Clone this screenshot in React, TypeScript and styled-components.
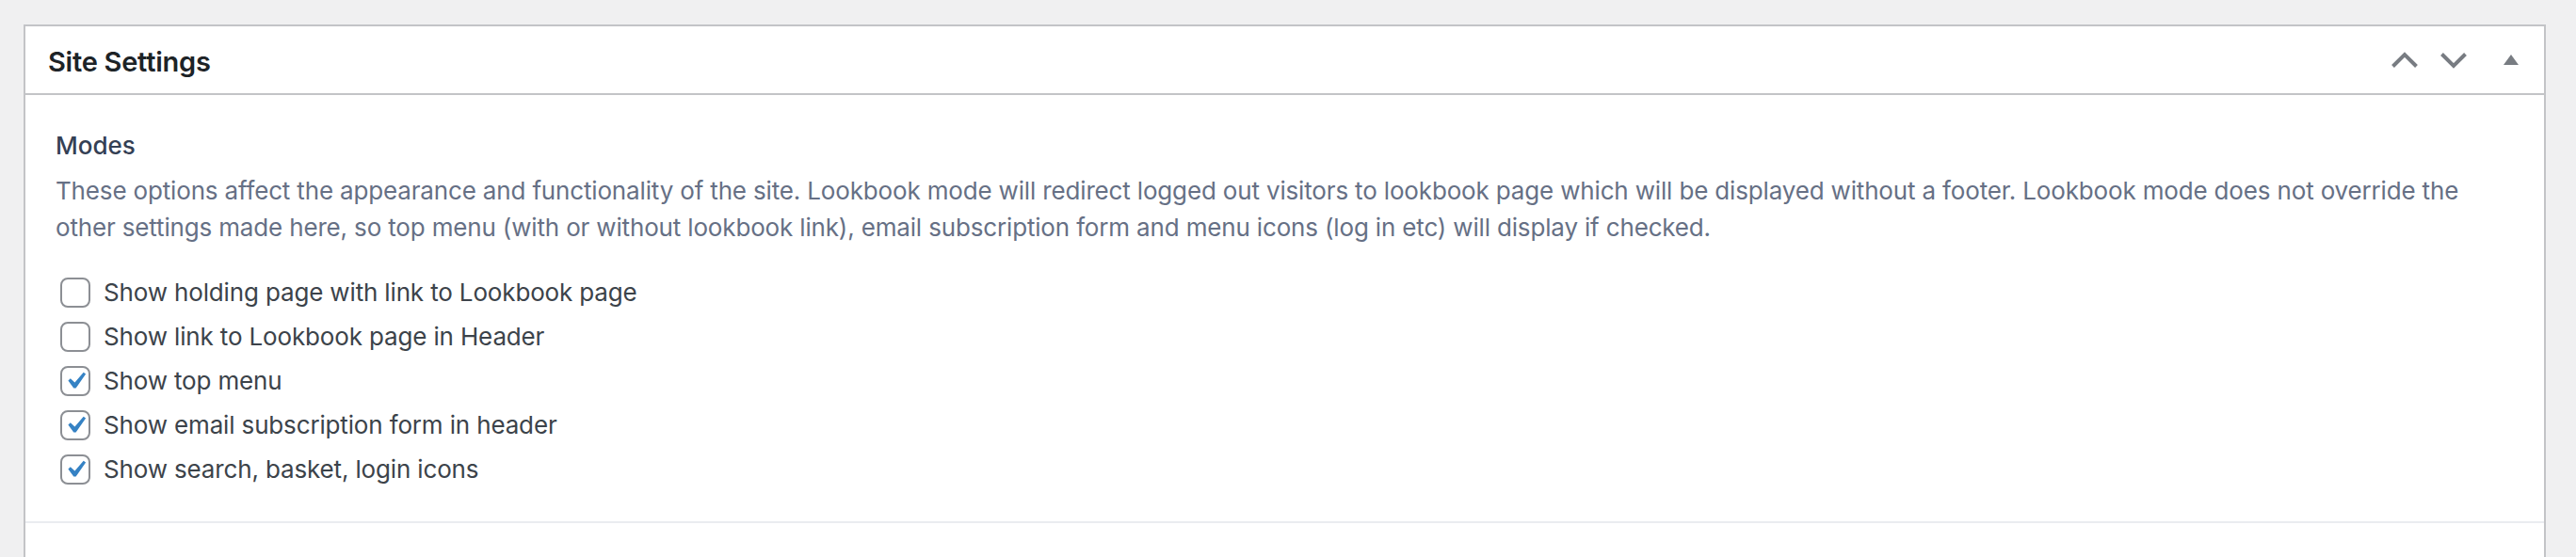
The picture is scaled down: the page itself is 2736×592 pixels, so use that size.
import React from "react";
import styled, { createGlobalStyle } from "styled-components";

const Global = createGlobalStyle`
  html, body { margin: 0; padding: 0; background: #f0f0f1; }
  body { font-family: Inter, "Noto Sans", sans-serif; -webkit-font-smoothing: antialiased; }
`;

const Page = styled.div`
  padding: 26px 32px 0 25px;
  height: 592px;
  box-sizing: border-box;
  overflow: hidden;
`;

const Postbox = styled.section`
  background: #fff;
  border: 2px solid #c3c4c7;
  border-bottom: none;
  min-height: 620px;
`;

const Header = styled.div`
  display: flex;
  align-items: center;
  justify-content: space-between;
  height: 71px;
  border-bottom: 2px solid #c3c4c7;
  padding-left: 24px;
`;

const Title = styled.h2`
  margin: 5px 0 0;
  font-size: 29px;
  font-weight: 600;
  letter-spacing: -0.25px;
  color: #1d2327;
  line-height: 1.4;
`;

const Controls = styled.div`
  display: flex;
  align-items: stretch;
  height: 100%;
`;

const IconButton = styled.button<{ $w: number }>`
  width: ${(p) => p.$w}px;
  border: 0;
  background: none;
  padding: 0;
  display: flex;
  align-items: center;
  justify-content: center;
  color: #787c82;
  cursor: pointer;
`;

const Field = styled.div<{ $divider?: boolean }>`
  padding: 36px 32px 32px 32px;
  border-top: ${(p) => (p.$divider ? "2px solid #eaecf0" : "none")};
`;

const Label = styled.div`
  font-size: 26px;
  font-weight: 500;
  color: #344054;
  line-height: 1.4;
  margin-bottom: 10px;
`;

const Instructions = styled.p`
  margin: 0 0 26px;
  font-size: 26px;
  line-height: 39px;
  letter-spacing: -0.16px;
  color: #667085;
`;

const List = styled.ul`
  list-style: none;
  margin: 0;
  padding: 0 0 0 5px;
`;

const Item = styled.li`
  display: flex;
  align-items: center;
  height: 47px;
  gap: 14px;
  font-size: 26px;
  letter-spacing: -0.15px;
  color: #3c434a;
`;

const Box = styled.span`
  width: 32px;
  height: 32px;
  box-sizing: border-box;
  border: 2px solid #8c8f94;
  border-radius: 8px;
  display: flex;
  align-items: center;
  justify-content: center;
  flex: none;
`;

const Chevron = ({ dir }: { dir: "up" | "down" }) => (
  <svg width="28" height="18" viewBox="0 0 28 18">
    <polyline
      points={dir === "up" ? "1.5,15.5 14,3 26.5,15.5" : "1.5,2.5 14,15 26.5,2.5"}
      fill="none"
      stroke="currentColor"
      strokeWidth="4"
    />
  </svg>
);

const Triangle = () => (
  <svg width="16" height="11" viewBox="0 0 16 11">
    <polygon points="8,0 16,11 0,11" fill="currentColor" />
  </svg>
);

const Check = () => (
  <svg width="40" height="40" viewBox="0 0 20 20" style={{ margin: "-4px" }}>
    <path d="M14.83 4.89l1.34.94-5.81 8.38H9.02L5.78 9.67l1.34-1.25 2.57 2.4z" fill="#3582c4" />
  </svg>
);

const items = [
  { label: "Show holding page with link to Lookbook page", checked: false },
  { label: "Show link to Lookbook page in Header", checked: false },
  { label: "Show top menu", checked: true },
  { label: "Show email subscription form in header", checked: true },
  { label: "Show search, basket, login icons", checked: true },
];

export default function App() {
  return (
    <Page>
      <Global />
      <Postbox>
        <Header>
          <Title>Site Settings</Title>
          <Controls>
            <IconButton $w={52} aria-label="Move up">
              <Chevron dir="up" />
            </IconButton>
            <IconButton $w={52} aria-label="Move down">
              <Chevron dir="down" />
            </IconButton>
            <IconButton $w={70} aria-label="Toggle panel">
              <Triangle />
            </IconButton>
          </Controls>
        </Header>
        <Field>
          <Label>Modes</Label>
          <Instructions>
            These options affect the appearance and functionality of the site. Lookbook mode will redirect logged out
            visitors to lookbook page which will be displayed without a footer. Lookbook mode does not override the
            other settings made here, so top menu (with or without lookbook link), email subscription form and menu
            icons (log in etc) will display if checked.
          </Instructions>
          <List>
            {items.map((it) => (
              <Item key={it.label}>
                <Box>{it.checked && <Check />}</Box>
                {it.label}
              </Item>
            ))}
          </List>
        </Field>
        <Field $divider />
      </Postbox>
    </Page>
  );
}
